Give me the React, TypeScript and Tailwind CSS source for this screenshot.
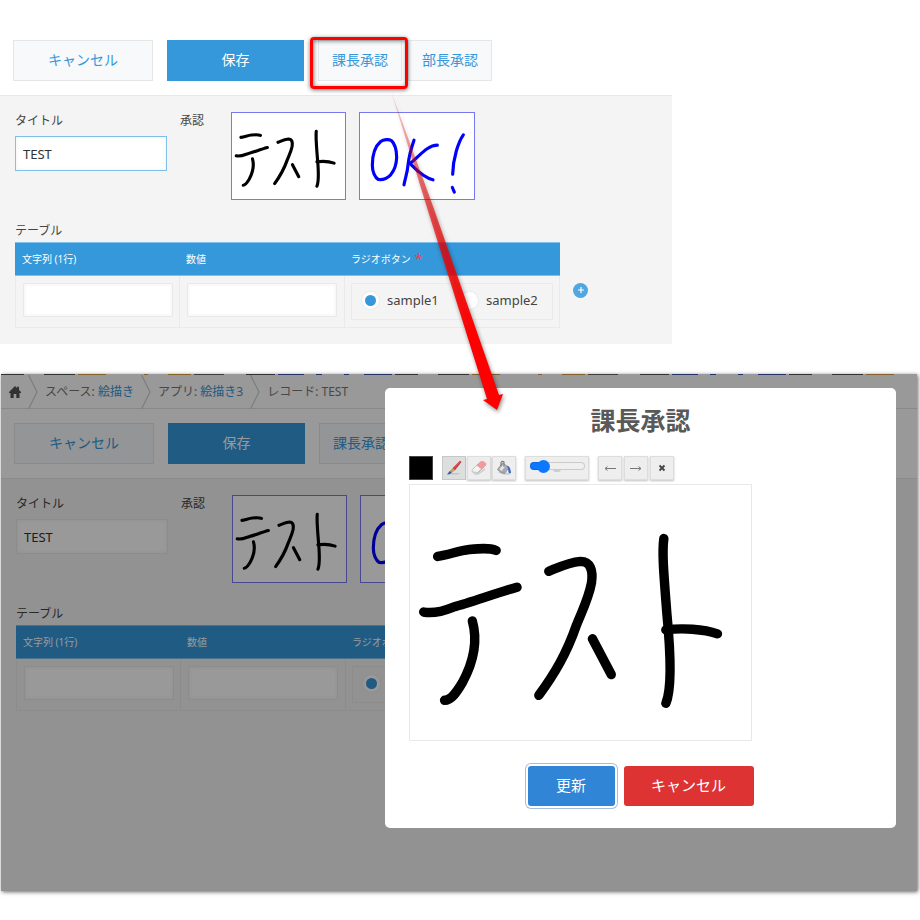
import { useId } from "react";

const TEST_STROKES = [
  "M27 72 C39 70 49 66 59 65 C69 64 79 63 86 66",
  "M13 128 C23 130 33 127 43 123 C59 119 83 110 107 103",
  "M62 137 C67 155 65 175 52 199 C46 209 41 217 34 217",
  "M139 87 C149 83 159 78 171 77 C181 77 184 86 182 99 C179 115 173 126 167 141 C157 170 145 190 129 212",
  "M183 155 Q193 174 202 191",
  "M255 54 C253 68 255 90 258 129 C261 160 264 204 257 220",
  "M257 146 C273 144 295 145 309 150",
];

const OK_STROKES = [
  "M62 85 C71 78 87 78 94 82 C107 94 110 114 110 133 C109 161 101 174 92 185 C82 195 69 201 55 199 C45 194 37 176 37 156 C37 124 47 98 62 85",
  "M162 81 C155 101 147 126 144 156 C142 181 135 196 132 215",
  "M232 96 C202 96 179 128 150 151 C165 166 187 192 219 200",
  "M310 65 C295 86 279 136 278 183",
  "M277 223 L283 237",
];

function Drawing({ strokes, color, label }: { strokes: string[]; color: string; label: string }) {
  return (
    <svg viewBox="0 0 342 257" role="img" aria-label={label} className="block size-full" fill="none" stroke={color} strokeWidth="9.500" strokeLinecap="round" strokeLinejoin="round">
      {strokes.map((d) => (
        <path key={d} d={d} />
      ))}
    </svg>
  );
}

function Toolbar({ highlighted = false }: { highlighted?: boolean }) {
  const light = "h-full border border-[#e3e7e8] bg-[#f7f9fa] pb-[2px] text-[#3498db]";
  return (
    <div className="flex h-[69px] items-stretch px-[13px] py-[14px] text-sm">
      <button type="button" className={`${light} w-[140px]`}>キャンセル</button>
      <button type="button" className="ml-[14px] h-full w-[137px] border border-[#3498db] bg-[#3498db] pb-[2px] text-white">保存</button>
      <div className="relative ml-[14px]">
        <button type="button" className={`${light} w-[84px]`}>課長承認</button>
        {highlighted && (
          <div className="absolute -top-[3px] -right-[6px] -bottom-2 -left-2 z-10 rounded-[4px] border-3 border-[#f00] shadow-[0_1px_4px_rgba(0,0,0,0.55),inset_1px_1px_4px_rgba(0,0,0,0.5)]" />
        )}
      </div>
      <button type="button" className={`${light} ml-[6px] w-[84px]`}>部長承認</button>
    </div>
  );
}

const cellInput = "block h-[34px] w-[150px] border border-[#e9e9e9] bg-white px-2 shadow-[inset_0_0_4px_#f0f0f0] outline-none";

function Radio({ group, value, checked = false }: { group: string; value: string; checked?: boolean }) {
  return (
    <label className="flex items-center gap-2">
      <input
        type="radio"
        name={group}
        defaultChecked={checked}
        className="size-[17px] appearance-none rounded-full border-3 border-white bg-white shadow-[0_0_2px_#ddd] checked:bg-[#3498db]"
      />
      {value}
    </label>
  );
}

function RecordForm({ active = false }: { active?: boolean }) {
  const id = useId();
  return (
    <div className="border-t border-[#e8e8e8] bg-[#f4f4f4] px-[15px] pt-4 pb-4 text-[#444]">
      <div className="flex h-[88px] items-start text-xs leading-[18px]">
        <div className="w-[165px]">
          <label htmlFor={`${id}-title`} className="block">タイトル</label>
          <input
            id={`${id}-title`}
            defaultValue="TEST"
            className={`mt-[6px] block h-[35px] w-[152px] border bg-white px-[7px] text-[13px] text-[#333] shadow-[inset_0_0_4px_#f0f0f0] outline-none ${active ? "border-[#7fbfea]" : "border-[#eaeaea]"}`}
          />
        </div>
        <div className="w-[51px]">承認</div>
        <div className="flex gap-[13px]">
          <div className="h-[88px] w-[115px] border border-[#7878f0] bg-white">
            <Drawing strokes={TEST_STROKES} color="#000" label="テスト" />
          </div>
          <div className="h-[88px] w-[116px] border border-[#7878f0] bg-white">
            <Drawing strokes={OK_STROKES} color="#00f" label="OK!" />
          </div>
        </div>
      </div>
      <h2 className="mt-5 text-xs leading-[22px]">テーブル</h2>
      <div className="flex items-center gap-[13px]">
        <table className="w-[545px] table-fixed border-separate border-spacing-0 text-left">
          <thead>
            <tr className="bg-[#3498db] text-[10px] text-white">
              <th className="h-[34px] w-[164px] border-y border-[#7fbfea] px-[7px] font-normal">文字列 (1行)</th>
              <th className="w-[165px] border-y border-[#7fbfea] px-[7px] font-normal">数値</th>
              <th className="border-y border-[#7fbfea] px-[7px] font-normal">
                <span className="flex items-center gap-1">
                  ラジオボタン <span className="h-4 text-sm leading-4 text-[#f04050]">*</span>
                </span>
              </th>
            </tr>
          </thead>
          <tbody>
            <tr className="align-top text-[13px]">
              <td className="h-[52px] border-b border-l border-[#eaeaea] px-[7px] pt-[7px]">
                <input aria-label="文字列 (1行)" className={cellInput} />
              </td>
              <td className="border-b border-l border-[#eaeaea] px-[7px] pt-[7px]">
                <input aria-label="数値" className={cellInput} />
              </td>
              <td className="border-x border-b border-[#eaeaea] px-[6px] pt-[7px]">
                <div role="radiogroup" aria-label="ラジオボタン" className="flex h-[37px] w-[202px] items-center border border-[#eaeaea] pb-[2px] pl-[10px]">
                  <div className="w-[99px]">
                    <Radio group={id} value="sample1" checked />
                  </div>
                  <Radio group={id} value="sample2" />
                </div>
              </td>
            </tr>
          </tbody>
        </table>
        <button type="button" aria-label="行を追加" className="mt-[10px] flex size-[15px] items-center justify-center rounded-full bg-[#4fa6e0] text-white">
          <svg viewBox="0 0 8 8" className="size-2" stroke="currentColor" strokeWidth="1.2">
            <path d="M4 1v6M1 4h6" />
          </svg>
        </button>
      </div>
    </div>
  );
}

const STRIP = [
  [23, "#555"], [20, "#fff"], [31, "#555"], [3, "#fff"], [28, "#d9a441"], [38, "#fff"], [4, "#d9a441"], [20, "#fff"],
  [23, "#d9a441"], [3, "#fff"], [30, "#666"], [22, "#fff"], [29, "#555"], [3, "#fff"], [26, "#3b55b0"], [12, "#fff"],
  [6, "#3b55b0"], [22, "#fff"], [5, "#3b55b0"], [15, "#fff"], [28, "#3b55b0"], [3, "#fff"],
] as const;

function Chevron() {
  return (
    <svg viewBox="0 0 10 34" className="h-[34px] w-[10px]" fill="none" stroke="#d0d0d0" strokeWidth="1.2">
      <path d="M0.5 0L9 17L0.5 34" />
    </svg>
  );
}

function Breadcrumbs() {
  return (
    <header>
      <div className="flex h-px overflow-hidden">
        {[...STRIP, ...STRIP, ...STRIP].map(([width, color], i) => (
          <span key={i} className="h-px shrink-0" style={{ width, backgroundColor: color }} />
        ))}
      </div>
      <nav className="flex h-[34px] items-center gap-[7px] border-b border-[#e3e3e3] pl-2 text-xs whitespace-nowrap text-[#777]">
        <a href="#home" aria-label="ホーム" className="text-[#555]">
          <svg viewBox="0 0 12 12" className="size-3" fill="currentColor">
            <path d="M6 0L8 2V.8h2V4l2 2v1h-1.500v5H7.300V8H4.700v4H1.500V7H0V6z" />
          </svg>
        </a>
        <Chevron />
        <span>スペース: <a href="#space" className="text-[#3498db]">絵描き</a></span>
        <Chevron />
        <span>アプリ: <a href="#app" className="text-[#3498db]">絵描き3</a></span>
        <Chevron />
        <span>レコード: TEST</span>
      </nav>
    </header>
  );
}

const tool = "flex size-6 items-center justify-center border border-[#ddd] bg-[#eee] text-[#555] shadow-[0_1px_2px_rgba(0,0,0,0.25)]";

function BrushIcon() {
  return (
    <svg viewBox="0 0 16 16" className="size-4">
      <path d="M3 14.500h9l2-1.500H6z" fill="#c4c4c4" />
      <path d="M14 .8L15.500 2L9 10.200L6.500 8.300z" fill="#c9303a" />
      <path d="M13.800 2L8 8.600" stroke="#e88288" strokeWidth="0.6" />
      <path d="M6.500 8.300L9 10.200L5.800 12.800L3.800 11z" fill="#c99a62" />
      <path d="M3.800 11L5.800 12.800C4 14.300 2.500 14.800 1 14.300C2.500 13.500 2.500 12 3.800 11z" fill="#35589c" />
    </svg>
  );
}

function EraserIcon() {
  return (
    <svg viewBox="0 0 16 16" className="size-4">
      <path d="M5 15L14 8V10L7 15z" fill="#ccc" />
      <path d="M1.500 9.500L6 5L11 9L6.500 13.500Q5 15 3 13.500L1.500 12Q.5 10.800 1.500 9.500z" fill="#f4f4f4" stroke="#aaa" strokeWidth="0.7" />
      <path d="M2 12L6.500 12.500L10 9.500" stroke="#bdbdbd" fill="none" />
      <path d="M6 5L9.500 1.800Q10.500 1 12 1.500L14 2.500Q15.500 3.500 14.800 5L11 9z" fill="#f29a9e" stroke="#df878c" strokeWidth="0.5" />
    </svg>
  );
}

function BucketIcon() {
  return (
    <svg viewBox="0 0 16 16" className="size-4">
      <path d="M1 12L8 14.800H14V13z" fill="#ccc" />
      <path d="M1.500 9.500L6.500 3L13 7.500L8.500 13.500Q4 13 1.500 9.500z" fill="#a8acb0" stroke="#84888c" strokeWidth="0.8" />
      <path d="M3.500 9L7.500 4.500L9.500 6L5.500 11z" fill="#e6e6e6" />
      <path d="M5 6V2.500Q6 .5 8 2V7" fill="none" stroke="#777" strokeWidth="1.1" />
      <path d="M11 5.500Q14.500 6.500 15 13Q13 14 12.500 12L12 8.500z" fill="#3b68c4" />
    </svg>
  );
}

function ApprovalDialog() {
  return (
    <div role="dialog" aria-label="課長承認" className="h-[440px] w-[511px] rounded-[5px] bg-white px-6 pt-4">
      <h1 className="text-center text-[25px] leading-8 font-bold text-[#595959]">課長承認</h1>
      <div className="mt-5 flex h-6 items-center gap-[9px]">
        <button type="button" aria-label="色" className="size-6 border border-[#444] bg-black" />
        <div className="flex gap-px">
          <button type="button" aria-label="ブラシ" className="flex size-6 items-center justify-center border border-[#c4c8c6] bg-[#dcdfde]"><BrushIcon /></button>
          <button type="button" aria-label="消しゴム" className={tool}><EraserIcon /></button>
          <button type="button" aria-label="塗りつぶし" className={tool}><BucketIcon /></button>
        </div>
        <div className="relative flex h-6 w-16 items-start justify-center border border-[#ddd] bg-[#eee] pt-[5px] shadow-[0_1px_2px_rgba(0,0,0,0.25)]">
          <span className="absolute top-3 left-[27px] h-[3px] w-2 rounded-b-full bg-[#ccc]" />
          <input
            type="range"
            aria-label="太さ"
            min="0"
            max="100"
            defaultValue="18"
            className="relative h-2 w-[55px] appearance-none rounded-full bg-[linear-gradient(to_right,#0b78ff_14px,#efefef_14px)] shadow-[inset_0_0_0_1px_rgba(0,0,0,0.15)] [&::-webkit-slider-thumb]:size-[13px] [&::-webkit-slider-thumb]:appearance-none [&::-webkit-slider-thumb]:rounded-full [&::-webkit-slider-thumb]:bg-[#0b78ff]"
          />
        </div>
        <div className="flex gap-[2px]">
          <button type="button" aria-label="元に戻す" className={tool}>
            <svg viewBox="0 0 12 8" className="h-2 w-3" fill="none" stroke="#777"><path d="M12 4.500H1M3.500 2.500L1 4.500L3.500 6.500" /></svg>
          </button>
          <button type="button" aria-label="やり直す" className={tool}>
            <svg viewBox="0 0 12 8" className="h-2 w-3" fill="none" stroke="#777"><path d="M0 4.500H11M8.500 2.500L11 4.500L8.500 6.500" /></svg>
          </button>
          <button type="button" aria-label="消去" className={tool}>
            <svg viewBox="0 0 8 8" className="size-2" stroke="#444" strokeWidth="1.800"><path d="M1.500 1.500L6.500 6.500M6.500 1.500L1.500 6.500" /></svg>
          </button>
        </div>
      </div>
      <div className="mt-1 h-[257px] w-[343px] border border-[#e8e8e8]">
        <Drawing strokes={TEST_STROKES} color="#000" label="テスト" />
      </div>
      <div className="mt-[25px] flex justify-center gap-[9px] text-[15px] text-white">
        <button type="button" className="h-10 w-[87px] rounded-[3px] bg-[#3085d6] pb-[2px] shadow-[0_0_0_2px_#fff,0_0_0_3px_#a4bede]">更新</button>
        <button type="button" className="h-10 w-[130px] rounded-[3px] bg-[#dd3333] pb-[2px]">キャンセル</button>
      </div>
    </div>
  );
}

export default function App() {
  return (
    <main className="relative min-h-screen overflow-hidden bg-white pt-[26px] font-['Noto_Sans','Noto_Sans_CJK_JP',sans-serif]">
      <section className="max-w-[672px]">
        <Toolbar highlighted />
        <RecordForm active />
      </section>
      <section className="relative mt-[30px] mr-[3px] ml-px h-[517px] overflow-hidden bg-[#f4f4f4] shadow-[1px_1px_4px_rgba(0,0,0,0.6)]">
        <div className="bg-white">
          <Breadcrumbs />
          <Toolbar />
        </div>
        <RecordForm />
        <div className="absolute inset-0 z-10 flex items-start justify-end bg-black/40 pt-[14px] pr-[21px]">
          <ApprovalDialog />
        </div>
      </section>
      <svg viewBox="0 0 120 330" className="pointer-events-none absolute top-[90px] left-[390px] z-20 h-[330px] w-[120px] drop-shadow-[1px_2px_2px_rgba(0,0,0,0.45)]" aria-hidden="true">
        <defs>
          <linearGradient id="arrow-fade" x1="0" y1="0" x2="0.35" y2="1">
            <stop offset="0" stopColor="#e00000" stopOpacity="0.15" />
            <stop offset="0.35" stopColor="#e80000" stopOpacity="0.55" />
            <stop offset="0.9" stopColor="#f00" />
          </linearGradient>
        </defs>
        <path d="M1 1L44 119L109 305L113 304L107 320L93 310L97 309L38 121z" fill="url(#arrow-fade)" />
      </svg>
    </main>
  );
}
